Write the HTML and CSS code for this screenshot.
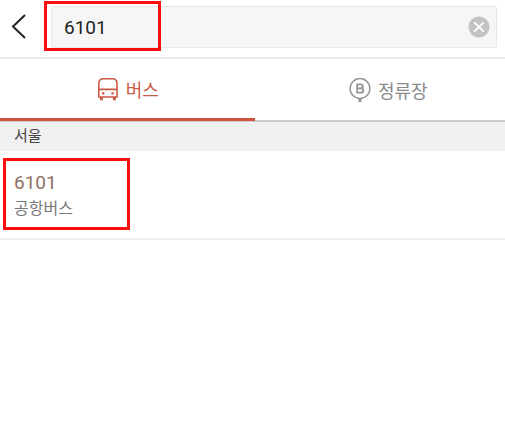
FILE: index.html
```html
<!DOCTYPE html>
<html lang="ko">
<head>
<meta charset="utf-8">
<meta name="viewport" content="width=device-width, initial-scale=1">
<title>6101</title>
<link rel="stylesheet" href="styles.css">
</head>
<body>
<header class="search-bar">
  <button class="back" type="button" aria-label="뒤로">
    <svg width="16" height="28" viewBox="0 0 16 28"><path d="M14 2 2 13.5 14 25" fill="none" stroke="#222" stroke-width="2"/></svg>
  </button>
  <div class="field">
    <input class="query" type="text" value="6101" aria-label="검색">
    <button class="clear" type="button" aria-label="지우기">
      <svg width="22" height="22" viewBox="0 0 22 22"><circle cx="11" cy="11" r="10.5" fill="#c3c3c3"/><path d="m6.3 6.3 9.4 9.4m0-9.4-9.4 9.4" stroke="#fff" stroke-width="1.8"/></svg>
    </button>
    <span class="mark mark-query"></span>
  </div>
</header>
<nav class="tabs">
  <button class="tab tab-active" type="button">
    <svg width="22" height="24" viewBox="0 0 22 24" fill="none" stroke="#cb5b48" stroke-width="1.6">
      <path d="M1.8 20V6.5Q1.8 1.8 6.5 1.8h8.8Q20 1.8 20 6.5V20zM2 12.4h18"/>
      <path d="M4.4 20v3.2M17.4 20v3.2" stroke-width="3"/>
      <path d="M5 16.3h2.4M14.4 16.3h2.4" stroke-width="2.2"/>
    </svg>
    버스
  </button>
  <button class="tab tab-stop" type="button">
    <svg width="22" height="26" viewBox="0 0 22 26" fill="none" stroke="#969696" stroke-width="1.5">
      <circle cx="11" cy="11.5" r="9.9"/>
      <path d="M11 21.5v3.7" stroke-width="3"/>
      <path d="M8.2 7.3h3.2q2.5 0 2.5 2t-2.5 2H8.2zm0 4h3.5q2.7 0 2.7 2.2t-2.7 2.2H8.2z" stroke-width="1.8"/>
    </svg>
    정류장
  </button>
</nav>
<main>
  <h2 class="region">서울</h2>
  <a class="route" href="#">
    <span class="number">6101</span>
    <span class="kind">공항버스</span>
    <span class="mark mark-route"></span>
  </a>
</main>
</body>
</html>
```
FILE: styles.css
```css
* {
  box-sizing: border-box;
}

body {
  margin: 0;
  background: #fff;
  font-family: Roboto, "Noto Sans CJK KR", sans-serif;
}

button {
  margin: 0;
  padding: 0;
  border: 0;
  background: none;
  font: inherit;
}

svg {
  display: block;
  flex: none;
}

.search-bar {
  display: flex;
  align-items: center;
  gap: 24px;
  padding: 6px 8px 9px 11px;
  border-bottom: 2px solid #ececec;
}

.field {
  position: relative;
  display: flex;
  flex: 1;
  align-items: center;
  height: 42px;
  padding: 0 6px 0 12px;
  border: 1px solid #e8e8e8;
  border-radius: 2px;
  background: #f6f6f6;
}

.query {
  flex: 1;
  min-width: 0;
  padding: 0;
  border: 0;
  outline: 0;
  background: none;
  color: #222;
  font: inherit;
  font-size: 19px;
}

.mark {
  position: absolute;
  border: 3px solid #fa0f0f;
  pointer-events: none;
}

.mark-query {
  top: -6px;
  left: -8px;
  width: 117px;
  height: 50px;
}

.tabs {
  display: grid;
  grid-template-columns: 128fr 125fr;
  border-bottom: 2px solid #cbcbcb;
}

.tab {
  display: flex;
  align-items: center;
  justify-content: center;
  gap: 7px;
  height: 61px;
  color: #8a8a8a;
  font-size: 18px;
}

.tab-stop {
  padding-left: 16px;
}

.tab-active {
  height: 62px;
  margin-bottom: -1px;
  border-bottom: 3px solid #cf503b;
  color: #c85a48;
}

.region {
  margin: 0;
  padding: 0 14px;
  background: #f0f0f0;
  color: #444;
  font-size: 15px;
  font-weight: 400;
  line-height: 29px;
}

.route {
  position: relative;
  display: flex;
  flex-direction: column;
  gap: 2px;
  padding: 20px 14px 17px;
  border-bottom: 2px solid #f0f0f0;
  text-decoration: none;
}

.number {
  color: #8d7262;
  font-size: 19px;
  line-height: 24px;
}

.kind {
  color: #777;
  font-size: 16px;
  line-height: 24px;
}

.mark-route {
  top: 7px;
  left: 3px;
  width: 127px;
  height: 72px;
}
```
